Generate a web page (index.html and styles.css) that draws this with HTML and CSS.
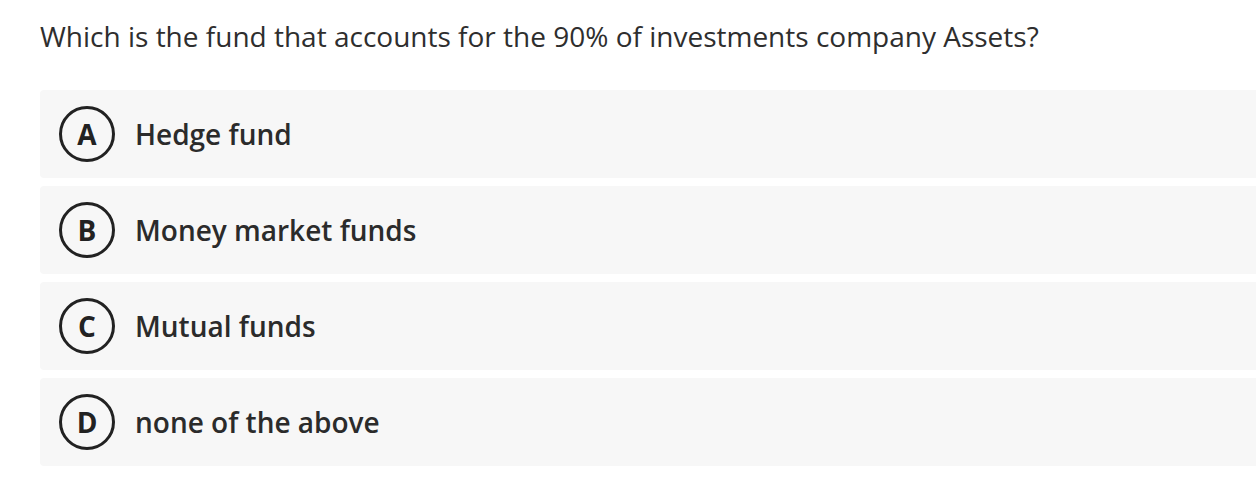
FILE: index.html
```html
<!DOCTYPE html>
<html>
<head>
<meta charset="utf-8">
<link rel="stylesheet" href="styles.css">
</head>
<body>
<div class="quiz">
  <h1 class="question">Which is the fund that accounts for the 90% of investments company Assets?</h1>
  <div class="options">
    <div class="option"><span class="letter">A</span><span class="label">Hedge fund</span></div>
    <div class="option"><span class="letter">B</span><span class="label">Money market funds</span></div>
    <div class="option"><span class="letter">C</span><span class="label">Mutual funds</span></div>
    <div class="option"><span class="letter">D</span><span class="label">none of the above</span></div>
  </div>
</div>
</body>
</html>
```
FILE: styles.css
```css
html, body {
  margin: 0;
  padding: 0;
  background: #ffffff;
  overflow: hidden;
}
body {
  font-family: "Open Sans", "Noto Sans", sans-serif;
  color: #2b2b2b;
}
.quiz {
  padding: 17px 0 0 40px;
  width: 1260px;
}
.question {
  margin: 0 0 35px 0;
  font-size: 28px;
  line-height: 38px;
  font-weight: 400;
  color: #2e2e2e;
}
.options {
  display: flex;
  flex-direction: column;
  gap: 8px;
}
.option {
  display: flex;
  align-items: center;
  gap: 20px;
  height: 88px;
  padding-left: 19px;
  background: #f7f7f7;
  border-radius: 4px;
}
.letter {
  box-sizing: border-box;
  width: 56px;
  height: 56px;
  border: 3.5px solid #222;
  border-radius: 50%;
  display: flex;
  align-items: center;
  justify-content: center;
  font-size: 28px;
  font-weight: 700;
  color: #222;
  line-height: 1;
}
.label {
  font-size: 28px;
  font-weight: 600;
  color: #2b2b2b;
}
```
